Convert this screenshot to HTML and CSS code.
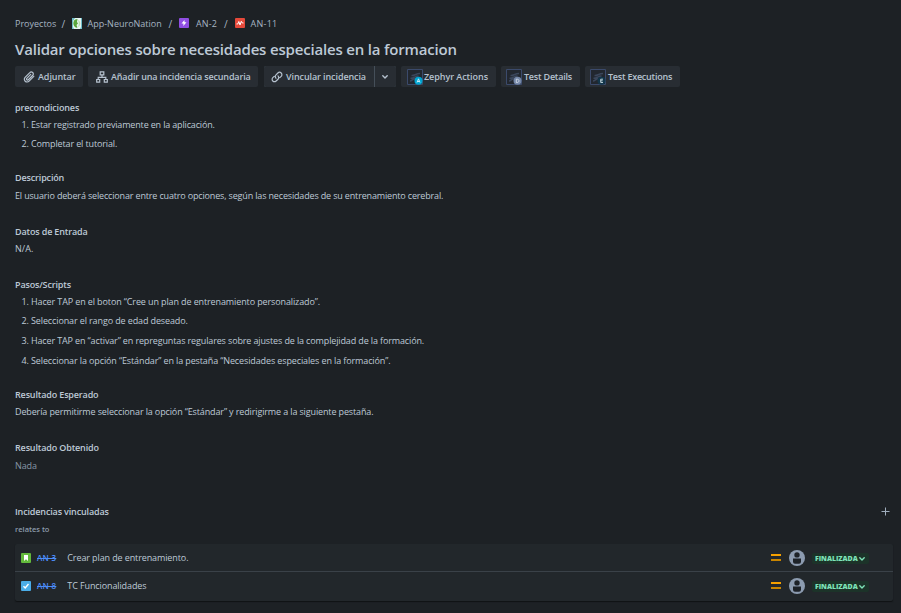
FILE: index.html
```html
<!DOCTYPE html>
<html lang="es">
<head>
<meta charset="utf-8">
<title>AN-11 Validar opciones</title>
<link rel="stylesheet" href="styles.css">
</head>
<body>
<svg class="defs" aria-hidden="true">
  <symbol id="zephyr" viewBox="0 0 16 16"><path d="M.5 15.500V.5h15v15z" fill="#22272f" stroke="#3b4a6b"/><path d="M4.500 6.500C7 7 9 4.500 13 4.500M3.500 9.300C7 9.500 8 7 11.500 7M3 12c2 0 2.500-2 5-2.500" fill="none" stroke="#3b475c" stroke-width="1.500"/></symbol>
  <symbol id="avatar" viewBox="0 0 16 16"><circle cx="8" cy="8" r="8" fill="#8c9bb0"/><circle cx="8" cy="4.900" r="2.700" fill="#1d2228"/><path d="M4 8.500h8v3.200a2 2 0 0 1-2 2H6a2 2 0 0 1-2-2z" fill="#1d2228"/></symbol>
  <symbol id="chevron" viewBox="0 0 6 6"><path d="M.8 1.800 3 4l2.200-2.200" fill="none" stroke="currentColor" stroke-width="1.400" stroke-linecap="round" stroke-linejoin="round"/></symbol>
  <symbol id="medium" viewBox="0 0 10 8"><path d="M0 0h10v2H0z" fill="#f5a000"/><path d="M0 5h10v2H0z" fill="#c98500"/></symbol>
</svg>
<nav class="crumbs">
  <span class="c-projects">Proyectos</span><span class="slash">/</span>
  <svg class="i-app" viewBox="0 0 10 11"><rect width="10" height="11" rx="1" fill="#e8f6f2"/><path d="M0 0h3L1 3v6l1 2H0zM9 0h1v11H8l1-2z" fill="#6dbcc8"/><path d="M5.500 1C2 1 1 4 1.500 6.500S4 10 5.500 9.500L4.500 7 6 5.500 5 4z" fill="#5aa63c"/><path d="M6 2c3 1 3 6 0 7 1-2 1-5 0-7z" fill="#b9dfad"/></svg>
  <span class="c-app">App-NeuroNation</span><span class="slash">/</span>
  <svg class="i-epic" viewBox="0 0 10 10"><rect width="10" height="10" rx="1" fill="#904ee2"/><path d="M5.500 2 2.500 5.500h2L4.300 8l3.200-3.700h-2z" fill="#fff"/></svg>
  <span class="c-an2">AN-2</span><span class="slash">/</span>
  <svg class="i-test" viewBox="0 0 10 10"><rect width="10" height="10" rx="1" fill="#e5493a"/><path d="M1.500 6h1.300l1-2.500L5 7l1.300-3.700L7.300 5h1.200" fill="none" stroke="#fff" stroke-linejoin="round"/></svg>
  <span class="c-an11">AN-11</span>
</nav>
<h1>Validar opciones sobre necesidades especiales en la formacion</h1>
<div class="toolbar">
  <button class="b-attach"><svg viewBox="0 0 12 12"><path d="m10.800 5.300-4.700 4.800a2.700 2.700 0 0 1-4-3.800l4.700-4.700a2 2 0 0 1 3 2.700L5.300 8.700A1 1 0 0 1 3.800 7.300l3.900-3.900" fill="none" stroke="currentColor" stroke-width="1.200" stroke-linecap="round"/></svg><span>Adjuntar</span></button>
  <button class="b-child"><svg viewBox="0 0 12 12"><path d="M4.200.8h3.600v3H4.200zM.7 8.500h3v2.700h-3zM8.300 8.500h3v2.700h-3zM6 4v2.300M2.200 8V6.300h7.600V8" fill="none" stroke="currentColor" stroke-width="1.200"/></svg><span>Añadir una incidencia secundaria</span></button>
  <div class="split">
    <button class="b-link"><svg viewBox="0 0 12 12"><path d="M5 7.200a2.300 2.300 0 0 1 0-3.300l1.900-1.900a2.300 2.300 0 0 1 3.300 3.300L8.800 6.700M7 4.900a2.300 2.300 0 0 1 0 3.300L5.100 10a2.300 2.300 0 0 1-3.300-3.300l1.400-1.400" fill="none" stroke="currentColor" stroke-width="1.200" stroke-linecap="round"/></svg><span>Vincular incidencia</span></button>
    <button class="b-more"><svg viewBox="0 0 6 6"><use href="#chevron"/></svg></button>
  </div>
  <button class="b-zephyr z"><svg viewBox="0 0 16 16"><use href="#zephyr"/><circle cx="11.500" cy="11.800" r="4" fill="#00a3d0"/><path d="m10 13.500 1.500-3.700 1.500 3.700M10.500 12.500h2" fill="none" stroke="#d9f3fa" stroke-width=".9"/></svg><span>Zephyr Actions</span></button>
  <button class="b-details z"><svg viewBox="0 0 16 16"><use href="#zephyr"/><circle cx="11.500" cy="11.800" r="4" fill="#7487a8"/><path d="M10.300 10.200h1c2.200 0 2.200 3.300 0 3.300h-1z" fill="none" stroke="#d3dbe8" stroke-width=".9"/></svg><span>Test Details</span></button>
  <button class="b-exec z"><svg viewBox="0 0 16 16"><use href="#zephyr"/><circle cx="11.500" cy="11.800" r="4" fill="#12364a"/><path d="M13 10.200h-2.300v3.300H13M10.700 11.800h2" fill="none" stroke="#c7d9e0" stroke-width=".9"/></svg><span>Test Executions</span></button>
</div>
<main>
  <section class="pre">
    <h2>precondiciones</h2>
    <ol><li class="t3">Estar registrado previamente en la aplicación.</li><li>Completar el tutorial.</li></ol>
  </section>
  <section class="desc">
    <h2>Descripción</h2>
    <p class="t3">El usuario deberá seleccionar entre cuatro opciones, según las necesidades de su entrenamiento cerebral.</p>
  </section>
  <section class="data">
    <h2>Datos de Entrada</h2>
    <p class="t0">N/A.</p>
  </section>
  <section class="steps">
    <h2>Pasos/Scripts</h2>
    <ol>
      <li class="t1">Hacer TAP en el boton “Cree un plan de entrenamiento personalizado”.</li>
      <li class="t1">Seleccionar el rango de edad deseado.</li>
      <li class="t2">Hacer TAP en “activar” en repreguntas regulares sobre ajustes de la complejidad de la formación.</li>
      <li class="t1">Seleccionar la opción “Estándar” en la pestaña “Necesidades especiales en la formación”.</li>
    </ol>
  </section>
  <section class="expected">
    <h2>Resultado Esperado</h2>
    <p>Debería permitirme seleccionar la opción “Estándar” y redirigirme a la siguiente pestaña.</p>
  </section>
  <section class="obtained">
    <h2>Resultado Obtenido</h2>
    <p class="muted">Nada</p>
  </section>
</main>
<section class="linked">
  <header><h2>Incidencias vinculadas</h2><svg viewBox="0 0 9 9"><path d="M4.500.5v8M.5 4.500h8" stroke="currentColor" fill="none"/></svg></header>
  <h3>relates to</h3>
  <div class="card">
    <div class="row">
      <svg class="type" viewBox="0 0 10 10"><rect width="10" height="10" rx="1" fill="#63ba3c"/><path d="M3 2h4v6L5 6.300 3 8z" fill="#fff"/></svg>
      <a>AN-3</a><span class="name">Crear plan de entrenamiento.</span>
      <svg class="prio"><use href="#medium"/></svg><svg class="avatar"><use href="#avatar"/></svg>
      <span class="status">FINALIZADA<svg><use href="#chevron"/></svg></span>
    </div>
    <div class="row">
      <svg class="type" viewBox="0 0 10 10"><rect width="10" height="10" rx="1" fill="#4bade8"/><path d="m2.500 5.200 1.700 1.800 3.300-4" fill="none" stroke="#fff" stroke-width="1.400"/></svg>
      <a>AN-8</a><span class="name">TC Funcionalidades</span>
      <svg class="prio"><use href="#medium"/></svg><svg class="avatar"><use href="#avatar"/></svg>
      <span class="status">FINALIZADA<svg><use href="#chevron"/></svg></span>
    </div>
  </div>
</section>
</body>
</html>
```
FILE: styles.css
```css
* { box-sizing: border-box; }
body {
  margin: 0;
  height: 613px;
  padding: 15px 8px 0 15px;
  overflow: hidden;
  background: #1d2125;
  color: #bdc9d6;
  font: 9px/18px "Open Sans", "Noto Sans", sans-serif;
  letter-spacing: -.13px;
}
h1, h2, h3, p, ol { margin: 0; }
svg { display: block; flex: none; }
.defs { position: absolute; width: 0; height: 0; }

.crumbs { display: flex; align-items: center; height: 17px; color: #a6b4c3; letter-spacing: 0; white-space: nowrap; }
.c-projects { width: 46.500px; }
.slash { width: 10.500px; font-size: 10px; }
.crumbs svg { width: 10px; height: 10px; margin-top: -1px; }
.crumbs .i-app { height: 11px; margin-right: 5.500px; }
.c-app { width: 81px; }
.crumbs .i-epic { margin-right: 7px; }
.c-an2, .c-an11 { letter-spacing: .12px; }
.c-an2 { width: 28px; }
.crumbs .i-test { margin-right: 6px; }
.c-an11 { letter-spacing: .27px; }
h1 { height: 34px; font-size: 15px; line-height: 34px; font-weight: 600; letter-spacing: -.18px; white-space: nowrap; }

.toolbar { display: flex; height: 21px; }
button {
  display: flex;
  align-items: center;
  height: 21px;
  padding: 0 0 0 8px;
  border: 0;
  border-radius: 2px;
  background: #282d33;
  color: #b6c2cf;
  font: 600 9px/22px "Open Sans", "Noto Sans", sans-serif;
  letter-spacing: -.15px;
  white-space: nowrap;
}
button svg { width: 12px; height: 12px; margin-right: 3px; }
button span { height: 21px; }
.b-attach { width: 68px; margin-right: 5px; letter-spacing: -.08px; }
.b-child { width: 170px; margin-right: 6px; }
.split { display: flex; gap: 1px; margin-right: 5px; background: #454f59; border-radius: 2px; }
.b-link { width: 110px; padding-left: 7px; letter-spacing: -.1px; border-radius: 2px 0 0 2px; }
.b-more { width: 21px; padding-left: 7px; border-radius: 0 2px 2px 0; }
.b-more svg { width: 6px; height: 6px; margin: 1px 0 0; }
.z { padding-left: 6px; }
.z svg { width: 16px; height: 16px; margin-right: 1px; }
.b-zephyr { width: 95px; margin-right: 5px; letter-spacing: -.06px; }
.b-details { width: 79px; margin-right: 5px; padding-left: 5px; letter-spacing: -.21px; }
.b-exec { width: 95px; padding-left: 5px; letter-spacing: -.23px; }
.b-details svg, .b-exec svg { margin-right: 2px; }

h2 { font-size: 9px; line-height: 18px; font-weight: 600; letter-spacing: -.15px; }
ol { padding: 0 0 0 16px; }
main p, li { white-space: nowrap; }
li::marker { letter-spacing: -.1px; }
.pre { padding-top: 12px; height: 82px; }
.pre ol { margin-top: -1px; }
.pre li { height: 19px; }
.desc { height: 54px; }
.data { height: 53px; }
.data p { margin-top: -1px; }
.steps { height: 110px; }
.steps ol { margin-top: -1px; }
.steps li { height: 20px; }
.steps li:first-child { height: 19px; }
.expected { height: 53px; }
.expected p { margin-top: -1px; }
.obtained { height: 64px; }
.t0 { letter-spacing: .05px; }
.t1 { letter-spacing: -.118px; }
.t2 { letter-spacing: -.132px; }
.t3 { letter-spacing: -.16px; }
.muted { color: #8696a7; }

.linked header { display: flex; align-items: center; justify-content: space-between; padding-right: 3px; }
.linked header svg { width: 9px; height: 9px; margin-top: -1px; color: #9fadbc; }
h3 { height: 24px; color: #8c9bab; font-size: 7.500px; line-height: 16px; font-weight: 600; letter-spacing: 0; }
.card { height: 57px; margin-top: -1px; border-radius: 2px; background: #22272b; box-shadow: 0 1px 1px #101214; }
.row { display: flex; align-items: center; height: 28px; padding: 0 24px 0 6px; }
.row:first-child { box-shadow: inset 0 -1px #3a4148; }
.type { width: 10px; height: 10px; margin-right: 6px; }
.row a { margin-right: 11px; color: #4c8dfa; font-size: 8px; font-weight: 600; letter-spacing: .15px; text-decoration: line-through; }
.name { flex: 1; letter-spacing: -.11px; }
.prio { width: 10px; height: 8px; margin-right: 8px; }
.avatar { width: 16px; height: 16px; margin-right: 7px; }
.row + .row .avatar { margin-top: -1px; }
.status { display: flex; align-items: center; gap: 1px; width: 57px; height: 11px; margin-top: 1px; padding-left: 3px; border-radius: 2px; background: #1c3329; color: #7ee2b8; font-size: 7px; font-weight: 800; line-height: 11px; letter-spacing: -.05px; }
.status svg { width: 6px; height: 6px; }
```
